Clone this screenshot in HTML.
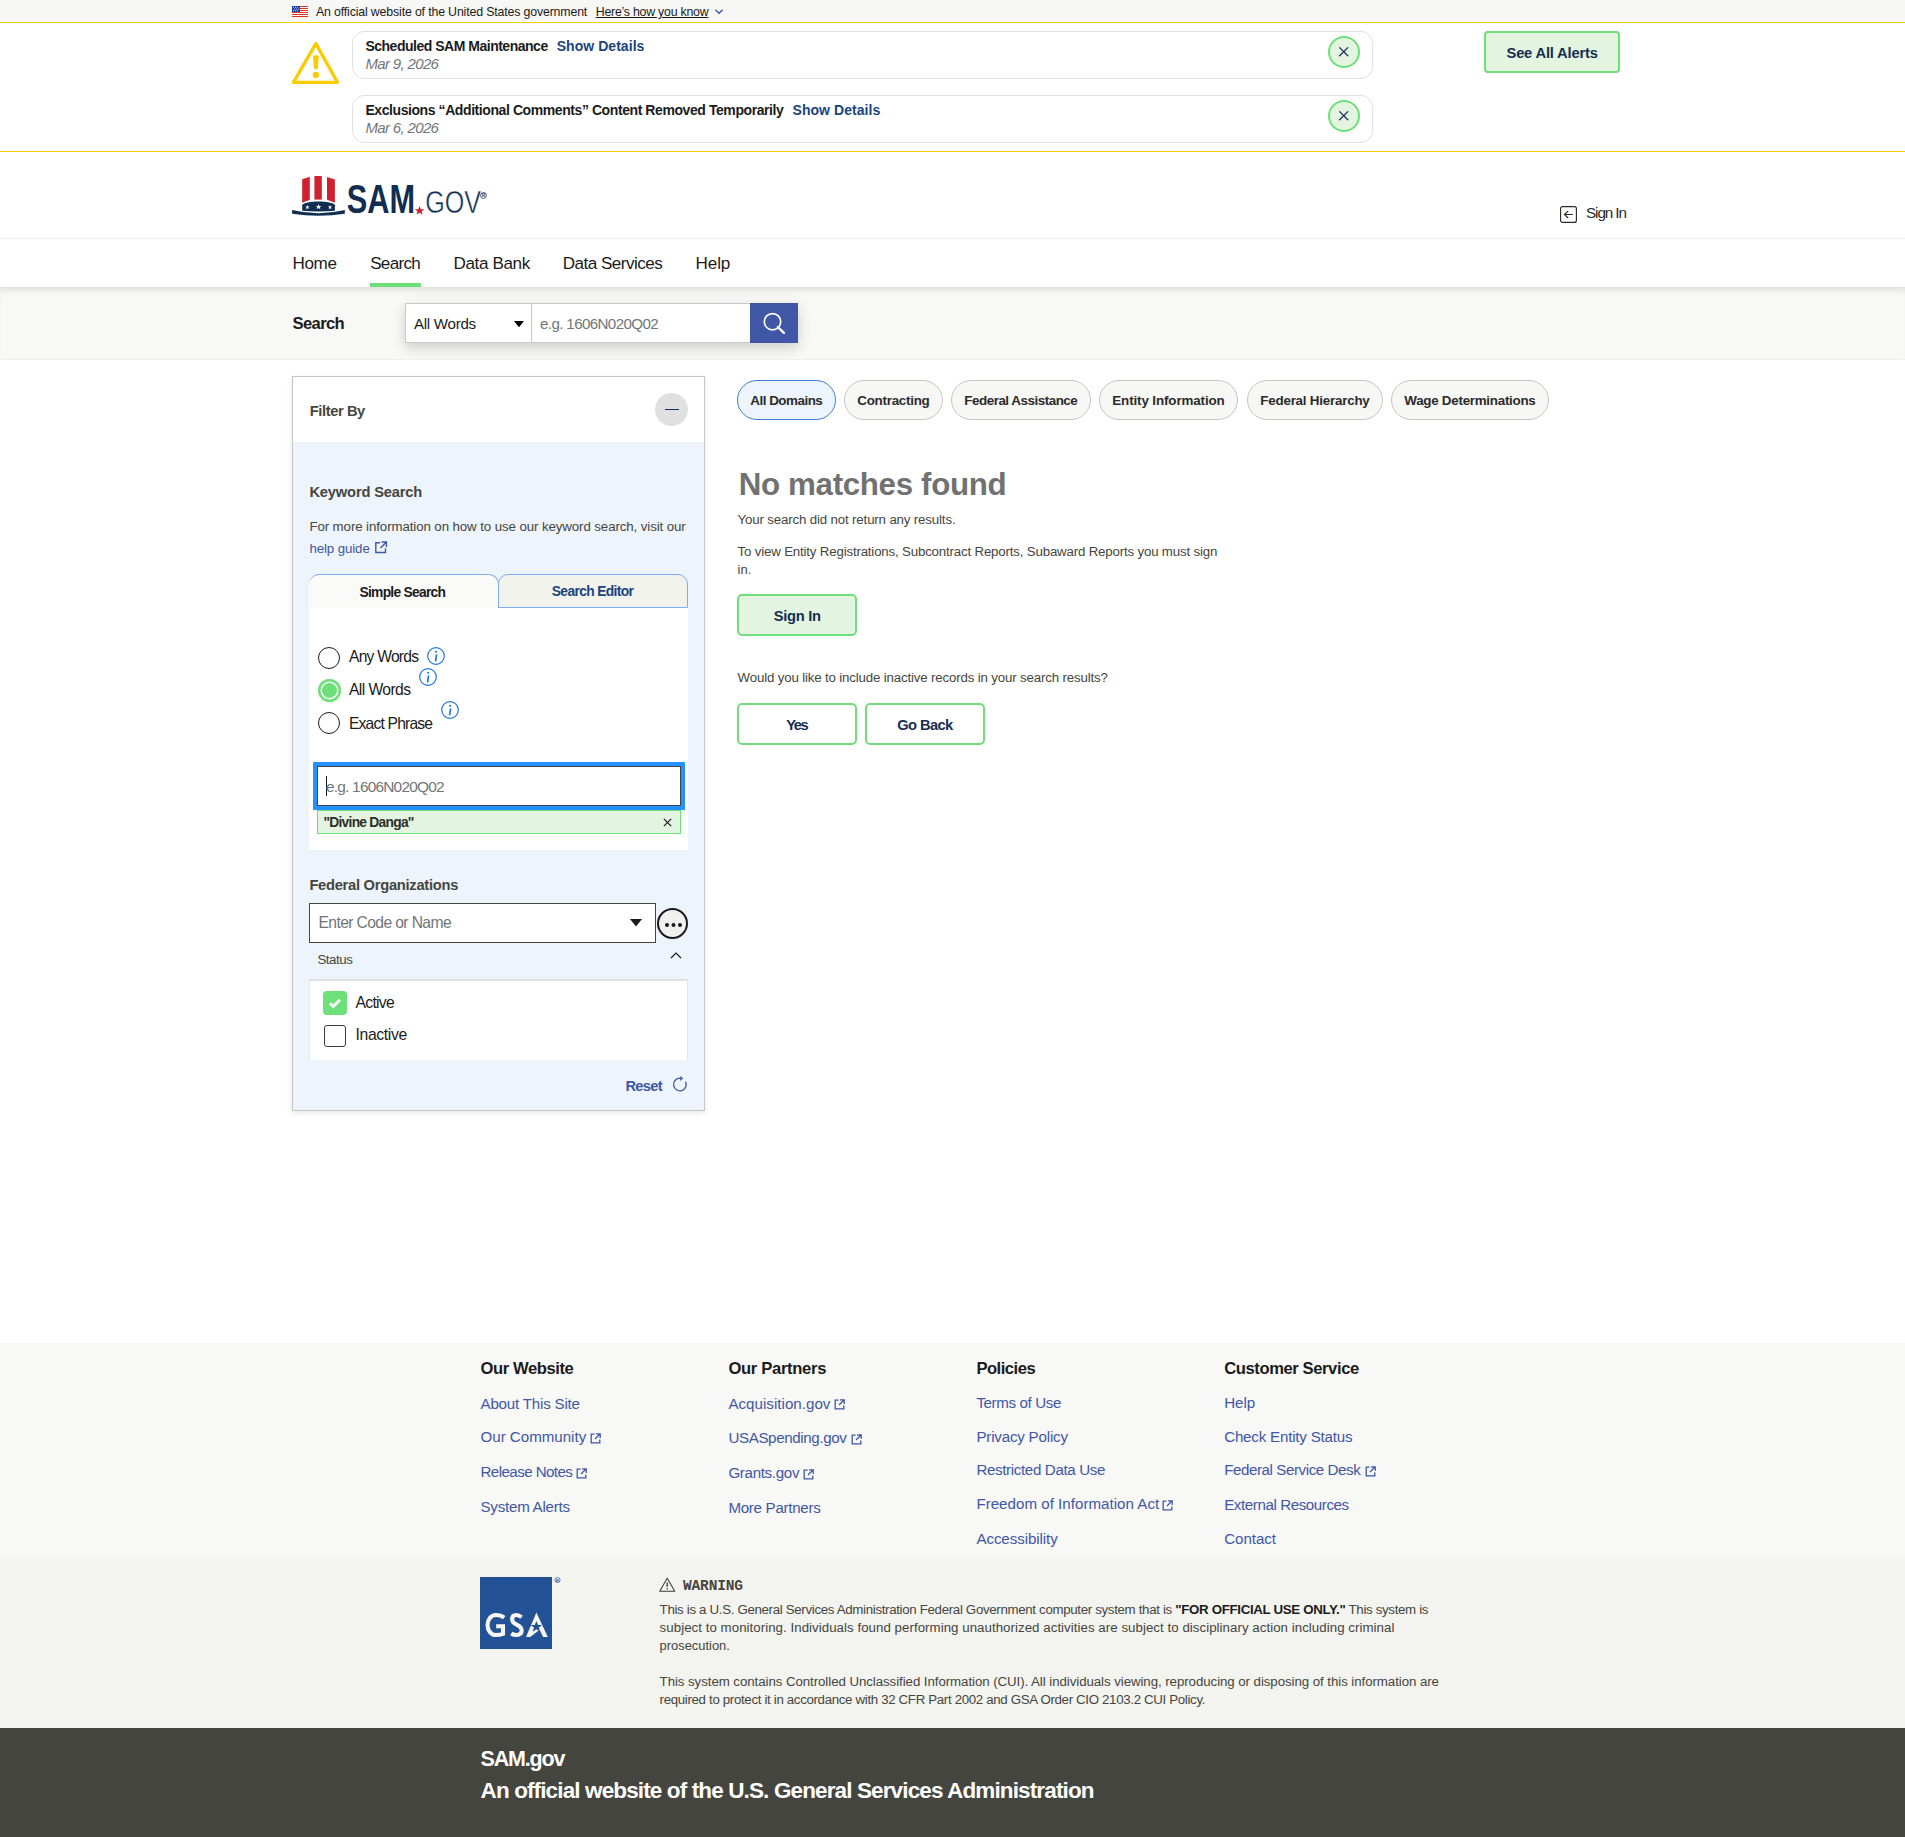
<!DOCTYPE html>
<html><head><meta charset="utf-8"><title>SAM.gov | Search</title>
<style>
html,body{margin:0;padding:0;}
body{width:1905px;height:1837px;position:relative;overflow:hidden;background:#fff;font-family:"Liberation Sans", sans-serif;}
.t{position:absolute;white-space:nowrap;}
.r{position:absolute;}
svg text{font-family:"Liberation Sans", sans-serif;}
</style></head><body>
<div class="r" style="left:0px;top:0px;width:1905px;height:21px;background:#f7f7f5;"></div>
<div class="r" style="left:0px;top:21px;width:1905px;height:1px;background:#f9fafc;"></div>
<div class="r" style="left:0px;top:22px;width:1905px;height:1px;background:#facc00;"></div>
<svg class="r" style="left:292px;top:6px" width="16" height="11" viewBox="0 0 16 11">
<rect width="16" height="11" fill="#fff"/>
<g fill="#e0301e"><rect y="0" width="16" height="1"/><rect y="2" width="16" height="1"/><rect y="4" width="16" height="1"/><rect y="6" width="16" height="1"/><rect y="8" width="16" height="1"/><rect y="10" width="16" height="1"/></g>
<rect width="8" height="6" fill="#1a3fa8"/>
<g fill="#fff"><circle cx="1.5" cy="1.2" r=".5"/><circle cx="3.5" cy="1.2" r=".5"/><circle cx="5.5" cy="1.2" r=".5"/><circle cx="2.5" cy="3" r=".5"/><circle cx="4.5" cy="3" r=".5"/><circle cx="6.5" cy="3" r=".5"/><circle cx="1.5" cy="4.8" r=".5"/><circle cx="3.5" cy="4.8" r=".5"/><circle cx="5.5" cy="4.8" r=".5"/></g></svg>
<div class="t" style="left:316px;top:5.02px;font-size:12.36px;line-height:15px;color:#1b1b1b;letter-spacing:-0.162px;">An official website of the United States government</div>
<div class="t" style="left:595.7px;top:5.02px;font-size:12.36px;line-height:15px;color:#1b1b1b;text-decoration:underline;text-underline-offset:1px;letter-spacing:-0.236px;">Here’s how you know</div>
<svg class="r" style="left:714px;top:8px" width="10" height="7" viewBox="0 0 10 7"><path d="M1.5 1.8 L5 5.3 L8.5 1.8" fill="none" stroke="#3452a4" stroke-width="1.3"/></svg>
<div class="r" style="left:0px;top:151px;width:1905px;height:1px;background:#facc00;"></div>
<svg class="r" style="left:288px;top:36px" width="56" height="54" viewBox="0 0 56 54">
<path d="M27.9 7.6 L49.4 46.3 L5.4 46.3 Z" fill="none" stroke="#facc00" stroke-width="3.3" stroke-linejoin="round"/>
<path d="M25 20.5 Q27.9 17.5 30.8 20.5 L29.8 32.5 Q27.9 34.5 26 32.5 Z" fill="#facc00"/>
<circle cx="27.9" cy="38.9" r="3.1" fill="#facc00"/></svg>
<div class="r" style="left:352px;top:31px;width:1021px;height:48px;border:1.5px solid #e0e0e0;border-radius:12px;box-sizing:border-box;background:#fff;"></div>
<div class="t" style="left:365.4px;top:37.05px;font-size:14px;line-height:18px;font-weight:700;color:#1b1b1b;letter-spacing:-0.487px;">Scheduled SAM Maintenance</div>
<div class="t" style="left:556.7px;top:37.05px;font-size:14px;line-height:18px;font-weight:700;color:#1a4480;letter-spacing:0.051px;">Show Details</div>
<div class="t" style="left:365.4px;top:54.19px;font-size:15.04px;line-height:19px;color:#71767a;font-style:italic;letter-spacing:-0.662px;">Mar 9, 2026</div>
<div class="r" style="left:1328px;top:36px;width:32px;height:32px;border:2px solid #6ee07a;border-radius:50%;box-sizing:border-box;background:#e3f5e1;"><svg width="28" height="28" viewBox="0 0 28 28" style="position:absolute;left:0;top:0"><path d="M9.6 9.6 L17.8 17.8 M17.8 9.6 L9.6 17.8" stroke="#162e51" stroke-width="1.25" stroke-linecap="round"/></svg></div>
<div class="r" style="left:352px;top:95px;width:1021px;height:48px;border:1.5px solid #e0e0e0;border-radius:12px;box-sizing:border-box;background:#fff;"></div>
<div class="t" style="left:365.4px;top:101.05px;font-size:14px;line-height:18px;font-weight:700;color:#1b1b1b;letter-spacing:-0.419px;">Exclusions “Additional Comments” Content Removed Temporarily</div>
<div class="t" style="left:792.5px;top:101.05px;font-size:14px;line-height:18px;font-weight:700;color:#1a4480;letter-spacing:0.051px;">Show Details</div>
<div class="t" style="left:365.4px;top:118.19px;font-size:15.04px;line-height:19px;color:#71767a;font-style:italic;letter-spacing:-0.662px;">Mar 6, 2026</div>
<div class="r" style="left:1328px;top:100px;width:32px;height:32px;border:2px solid #6ee07a;border-radius:50%;box-sizing:border-box;background:#e3f5e1;"><svg width="28" height="28" viewBox="0 0 28 28" style="position:absolute;left:0;top:0"><path d="M9.6 9.6 L17.8 17.8 M17.8 9.6 L9.6 17.8" stroke="#162e51" stroke-width="1.25" stroke-linecap="round"/></svg></div>
<div class="r" style="left:1484px;top:31px;width:136px;height:42px;border:2px solid #6ee07a;border-radius:4px;box-sizing:border-box;background:#e3f5e1;"></div>
<div class="t" style="left:1506.5px;top:43.81px;font-size:14.7px;line-height:18px;font-weight:700;color:#162e51;letter-spacing:-0.170px;">See All Alerts</div>
<svg class="r" style="left:291px;top:175px" width="200" height="44" viewBox="0 0 200 44">
<g fill="#d0202e"><path d="M11.2 4.3 L18.8 1.8 L18.8 24.8 L11.2 27.7 Z"/><path d="M23.4 1 L30.8 1 L30.8 24.6 L23.4 24.6 Z"/><path d="M36 2 L43.9 4.4 L43.9 27.7 L36 24.8 Z"/></g>
<path d="M11.2 30.2 C13.5 25.2 41.6 25.2 43.9 30.2 L43.9 35.8 Q27.5 37.2 11.2 35.8 Z" fill="#112e51"/>
<g fill="#fff"><path d="M16.40 30.00 L16.94 31.56 L18.59 31.59 L17.27 32.58 L17.75 34.16 L16.40 33.22 L15.05 34.16 L15.53 32.58 L14.21 31.59 L15.86 31.56Z"/><path d="M27.60 28.90 L28.31 30.93 L30.45 30.97 L28.74 32.27 L29.36 34.33 L27.60 33.10 L25.84 34.33 L26.46 32.27 L24.75 30.97 L26.89 30.93Z"/><path d="M39.00 30.00 L39.54 31.56 L41.19 31.59 L39.87 32.58 L40.35 34.16 L39.00 33.22 L37.65 34.16 L38.13 32.58 L36.81 31.59 L38.46 31.56Z"/></g>
<path d="M1.1 35 Q27.5 41.4 53.8 35 L53.8 38.8 Q27.5 42.8 1.1 38.8 Z" fill="#112e51"/>
<text x="55.7" y="38" font-family="Liberation Sans" font-weight="700" font-size="40" fill="#112e51" textLength="68.3" lengthAdjust="spacingAndGlyphs">SAM</text>
<path d="M128.6 31 l1.3 3.2 3.4 .1 -2.7 2.1 1 3.3 -3 -2 -3 2 1 -3.3 -2.7 -2.1 3.4 -.1z" fill="#d0202e"/>
<text x="134.2" y="38.3" font-family="Liberation Sans" font-weight="400" font-size="30.5" fill="#112e51" stroke="#fff" stroke-width=".45" textLength="55.8" lengthAdjust="spacingAndGlyphs">GOV</text>
<circle cx="192.5" cy="20.5" r="2.9" fill="none" stroke="#112e51" stroke-width=".8"/><text x="192.5" y="22.3" font-size="4.5" font-weight="700" text-anchor="middle" fill="#112e51" font-family="Liberation Sans">R</text></svg>
<div class="r" style="left:0px;top:238px;width:1905px;height:1px;background:#f0f0ec;"></div>
<svg class="r" style="left:1560px;top:206px" width="18" height="17" viewBox="0 0 18 17"><rect x=".6" y=".6" width="15.8" height="15.8" rx="2" fill="none" stroke="#2b2b28" stroke-width="1.15"/><path d="M12.9 8.5 L4.2 8.5 M8.2 5 L4.4 8.5 L8.2 12" fill="none" stroke="#2b2b28" stroke-width="1.1"/></svg>
<div class="t" style="left:1586px;top:203.30px;font-size:15.3px;line-height:19px;color:#2b2b28;letter-spacing:-1.104px;">Sign In</div>
<div class="t" style="left:292.5px;top:252.77px;font-size:17.1px;line-height:21px;color:#1b1b1b;letter-spacing:-0.370px;">Home</div>
<div class="t" style="left:370.2px;top:252.77px;font-size:17.1px;line-height:21px;color:#1b1b1b;letter-spacing:-0.714px;">Search</div>
<div class="t" style="left:453.5px;top:252.77px;font-size:17.1px;line-height:21px;color:#1b1b1b;letter-spacing:-0.379px;">Data Bank</div>
<div class="t" style="left:562.7px;top:252.77px;font-size:17.1px;line-height:21px;color:#1b1b1b;letter-spacing:-0.517px;">Data Services</div>
<div class="t" style="left:695.6px;top:252.77px;font-size:17.1px;line-height:21px;color:#1b1b1b;letter-spacing:-0.152px;">Help</div>
<div class="r" style="left:370px;top:283px;width:51px;height:4px;background:#6ee07a;"></div>
<div class="r" style="left:0px;top:287px;width:1905px;height:72.5px;background:#f8f8f6;box-shadow:inset 0 8px 8px -6px rgba(0,0,0,.13);border-bottom:1px solid #f0f0ea;box-sizing:border-box;"></div>
<div class="t" style="left:292.5px;top:312.95px;font-size:16.6px;line-height:21px;font-weight:700;color:#1b1b1b;letter-spacing:-0.632px;">Search</div>
<div class="r" style="left:405px;top:303px;width:393px;height:40px;box-shadow:0 5px 12px rgba(0,0,0,.17);"></div>
<div class="r" style="left:531px;top:303px;width:220px;height:40px;background:#fff;border:1px solid #c9c9c9;box-sizing:border-box;"></div>
<div class="r" style="left:405px;top:303px;width:127px;height:40px;background:#fff;border:1px solid #c9c9c9;box-sizing:border-box;"></div>
<div class="t" style="left:414px;top:314.25px;font-size:15.14px;line-height:19px;color:#1b1b1b;letter-spacing:-0.292px;">All Words</div>
<svg class="r" style="left:514px;top:321.4px" width="10" height="7" viewBox="0 0 10 7"><path d="M0 0 L10 0 L5 6.2Z" fill="#000"/></svg>
<div class="t" style="left:540px;top:314.25px;font-size:15.14px;line-height:19px;color:#71767a;letter-spacing:-0.615px;">e.g. 1606N020Q02</div>
<div class="r" style="left:750px;top:303px;width:48px;height:40px;background:#3f57a6;"><svg width="48" height="40" viewBox="0 0 48 40" style="position:absolute;left:0;top:0"><circle cx="22.5" cy="18.7" r="8.2" fill="none" stroke="#fff" stroke-width="1.75"/><path d="M27.9 24.1 L33.9 29.8" stroke="#fff" stroke-width="2.4" stroke-linecap="round"/></svg></div>
<div class="r" style="left:292px;top:376px;width:413px;height:735px;border:1px solid #c6c6c6;box-sizing:border-box;background:#edf4fb;box-shadow:0 2px 6px rgba(0,0,0,.10);"></div>
<div class="r" style="left:293px;top:377px;width:411px;height:65px;background:#fff;"></div>
<div class="t" style="left:309.7px;top:402.21px;font-size:14.7px;line-height:18px;font-weight:700;color:#454540;letter-spacing:-0.396px;">Filter By</div>
<div class="r" style="left:655px;top:393px;width:33px;height:33px;background:#e0e0e0;border-radius:50%;"><div style="position:absolute;left:10px;top:16px;width:14px;height:1.4px;background:#0b3163"></div></div>
<div class="t" style="left:309.4px;top:483.41px;font-size:14.7px;line-height:18px;font-weight:700;color:#454540;letter-spacing:-0.170px;">Keyword Search</div>
<div class="t" style="left:309.4px;top:517.50px;font-size:13.29px;line-height:17px;color:#454540;letter-spacing:-0.095px;">For more information on how to use our keyword search, visit our</div>
<div class="t" style="left:309.4px;top:539.50px;font-size:13.29px;line-height:17px;color:#3f57a6;letter-spacing:-0.100px;">help guide</div>
<svg class="r" style="left:374px;top:541px" width="14" height="13" viewBox="0 0 14 13"><path d="M6 1.8 L1.8 1.8 L1.8 11.5 L11.5 11.5 L11.5 7.3" fill="none" stroke="#3f57a6" stroke-width="1.4"/><path d="M7.5 1 L12.4 1 L12.4 5.9 M12.4 1 L6.5 6.9" fill="none" stroke="#3f57a6" stroke-width="1.4"/></svg>
<div class="r" style="left:309px;top:574px;width:190px;height:34px;background:#fafaf8;border-top:1px solid #80acf8;border-right:1px solid #80acf8;border-radius:10px 10px 0 0;box-sizing:border-box;"></div>
<div class="r" style="left:498px;top:574px;width:190px;height:34px;background:#f3f3ee;border:1px solid #80acf8;border-radius:10px 10px 0 0;box-sizing:border-box;"></div>
<div class="t" style="left:359.5px;top:583.72px;font-size:13.8px;line-height:17px;font-weight:700;color:#1b1b1b;letter-spacing:-0.724px;">Simple Search</div>
<div class="t" style="left:551.8px;top:582.72px;font-size:13.8px;line-height:17px;font-weight:700;color:#1a4480;letter-spacing:-0.643px;">Search Editor</div>
<div class="r" style="left:309px;top:608px;width:379px;height:242px;background:#fff;"></div>
<div class="r" style="left:318px;top:646.8px;width:22px;height:22px;border:1.5px solid #1b1b1b;border-radius:50%;box-sizing:border-box;background:#fff;"></div>
<div class="t" style="left:349px;top:647.47px;font-size:15.66px;line-height:20px;color:#1b1b1b;letter-spacing:-0.785px;">Any Words</div>
<svg class="r" style="left:427px;top:647.2px" width="18" height="18" viewBox="0 0 18 18"><circle cx="9" cy="9" r="8.3" fill="none" stroke="#2172e0" stroke-width="1.2"/><circle cx="9.1" cy="4.8" r="1.05" fill="#2172e0"/><path d="M9.5 8 L8.7 13.6" stroke="#2172e0" stroke-width="1.7" stroke-linecap="round"/></svg>
<div class="r" style="left:317.5px;top:679.4px;width:23px;height:23px;border-radius:50%;background:#6ee07a;box-shadow:inset 0 0 0 2.5px #6ee07a, inset 0 0 0 4px #fff;"></div>
<div class="t" style="left:349px;top:680.37px;font-size:15.66px;line-height:20px;color:#1b1b1b;letter-spacing:-0.588px;">All Words</div>
<svg class="r" style="left:419px;top:668.2px" width="18" height="18" viewBox="0 0 18 18"><circle cx="9" cy="9" r="8.3" fill="none" stroke="#2172e0" stroke-width="1.2"/><circle cx="9.1" cy="4.8" r="1.05" fill="#2172e0"/><path d="M9.5 8 L8.7 13.6" stroke="#2172e0" stroke-width="1.7" stroke-linecap="round"/></svg>
<div class="r" style="left:318px;top:711.9px;width:22px;height:22px;border:1.5px solid #1b1b1b;border-radius:50%;box-sizing:border-box;background:#fff;"></div>
<div class="t" style="left:349px;top:713.57px;font-size:15.66px;line-height:20px;color:#1b1b1b;letter-spacing:-0.830px;">Exact Phrase</div>
<svg class="r" style="left:441px;top:701px" width="18" height="18" viewBox="0 0 18 18"><circle cx="9" cy="9" r="8.3" fill="none" stroke="#2172e0" stroke-width="1.2"/><circle cx="9.1" cy="4.8" r="1.05" fill="#2172e0"/><path d="M9.5 8 L8.7 13.6" stroke="#2172e0" stroke-width="1.7" stroke-linecap="round"/></svg>
<div class="r" style="left:313px;top:762px;width:372px;height:48px;border:4px solid #2491ff;box-sizing:border-box;"></div>
<div class="r" style="left:317px;top:766px;width:364px;height:40px;border:1.6px solid #3d4551;box-sizing:border-box;background:#fff;"></div>
<div class="r" style="left:326px;top:776px;width:1.3px;height:20px;background:#1b1b1b;"></div>
<div class="t" style="left:326px;top:776.55px;font-size:15.45px;line-height:19px;color:#71767a;letter-spacing:-0.791px;">e.g. 1606N020Q02</div>
<div class="r" style="left:317px;top:810px;width:364px;height:24px;background:#e3f5e1;border:1px solid #6ee07a;box-sizing:border-box;"></div>
<div class="t" style="left:323.5px;top:814.12px;font-size:13.8px;line-height:17px;font-weight:700;color:#2e2e2a;letter-spacing:-0.738px;">"Divine Danga"</div>
<svg class="r" style="left:663px;top:818px" width="9" height="9" viewBox="0 0 9 9"><path d="M.8 .8 L8.2 8.2 M8.2 .8 L.8 8.2" stroke="#1b1b1b" stroke-width="1.2"/></svg>
<div class="t" style="left:309.4px;top:876.31px;font-size:14.7px;line-height:18px;font-weight:700;color:#454540;letter-spacing:-0.263px;">Federal Organizations</div>
<div class="r" style="left:309px;top:903px;width:347px;height:40px;border:1.5px solid #46463f;box-sizing:border-box;background:#fff;"></div>
<div class="t" style="left:318.5px;top:912.87px;font-size:15.66px;line-height:20px;color:#71767a;letter-spacing:-0.617px;">Enter Code or Name</div>
<svg class="r" style="left:630px;top:919px" width="12" height="8" viewBox="0 0 12 8"><path d="M0 0 L12 0 L6 7.4Z" fill="#1b1b1b"/></svg>
<div class="r" style="left:657px;top:908px;width:31px;height:31px;border:2px solid #1b1b1b;border-radius:50%;box-sizing:border-box;background:#f0f0f0;"><div style="position:absolute;left:6px;top:13px;width:4px;height:4px;border-radius:50%;background:#1b1b1b;box-shadow:6.5px 0 0 #1b1b1b,13px 0 0 #1b1b1b"></div></div>
<div class="t" style="left:317.4px;top:951.30px;font-size:13.29px;line-height:17px;color:#454540;letter-spacing:-0.431px;">Status</div>
<svg class="r" style="left:670px;top:951px" width="12" height="8" viewBox="0 0 12 8"><path d="M1 7 L6 2 L11 7" fill="none" stroke="#1b1b1b" stroke-width="1.2"/></svg>
<div class="r" style="left:309px;top:979px;width:379px;height:81px;background:#fff;border-top:2px solid #dfe1e2;border-left:1px solid #e6e6e2;border-right:1px solid #e6e6e2;box-sizing:border-box;"></div>
<div class="r" style="left:323px;top:991px;width:24px;height:24px;background:#6ee07a;border-radius:4px;"><svg width="24" height="24" viewBox="0 0 24 24" style="position:absolute;left:0;top:0"><path d="M7 12.3 L10.3 15.5 L17 8.8" fill="none" stroke="#fff" stroke-width="2.8"/></svg></div>
<div class="t" style="left:355.5px;top:992.94px;font-size:15.76px;line-height:20px;color:#1b1b1b;letter-spacing:-0.738px;">Active</div>
<div class="r" style="left:324px;top:1025px;width:22px;height:22px;border:1.5px solid #3a3a36;border-radius:3px;box-sizing:border-box;background:#fff;"></div>
<div class="t" style="left:355.5px;top:1024.94px;font-size:15.76px;line-height:20px;color:#1b1b1b;letter-spacing:-0.369px;">Inactive</div>
<div class="t" style="left:625.4px;top:1077.31px;font-size:14.7px;line-height:18px;font-weight:700;color:#3f57a6;letter-spacing:-0.704px;">Reset</div>
<svg class="r" style="left:672px;top:1075px" width="16" height="18" viewBox="0 0 16 18"><path d="M13.5 6.6 A6.3 6.3 0 1 1 8.2 3.2" fill="none" stroke="#3f57a6" stroke-width="1.3"/><path d="M8.2 0.9 L11.2 3.3 L8.2 5.9 Z" fill="#3f57a6"/></svg>
<div class="r" style="left:737px;top:380px;width:99px;height:40px;background:#edf4fb;border:1.5px solid #3d7fd8;border-radius:20px;box-sizing:border-box;"></div>
<div class="t" style="left:750.3px;top:391.66px;font-size:13.4px;line-height:17px;font-weight:700;color:#2b2b2b;letter-spacing:-0.489px;">All Domains</div>
<div class="r" style="left:844px;top:380px;width:99px;height:40px;background:#f7f7f5;border:1px solid #c6c6c6;border-radius:20px;box-sizing:border-box;"></div>
<div class="t" style="left:857.3px;top:391.66px;font-size:13.4px;line-height:17px;font-weight:700;color:#2b2b2b;letter-spacing:-0.264px;">Contracting</div>
<div class="r" style="left:951px;top:380px;width:140px;height:40px;background:#f7f7f5;border:1px solid #c6c6c6;border-radius:20px;box-sizing:border-box;"></div>
<div class="t" style="left:964.3px;top:391.66px;font-size:13.4px;line-height:17px;font-weight:700;color:#2b2b2b;letter-spacing:-0.475px;">Federal Assistance</div>
<div class="r" style="left:1099px;top:380px;width:139px;height:40px;background:#f7f7f5;border:1px solid #c6c6c6;border-radius:20px;box-sizing:border-box;"></div>
<div class="t" style="left:1112.3px;top:391.66px;font-size:13.4px;line-height:17px;font-weight:700;color:#2b2b2b;letter-spacing:-0.121px;">Entity Information</div>
<div class="r" style="left:1247px;top:380px;width:136px;height:40px;background:#f7f7f5;border:1px solid #c6c6c6;border-radius:20px;box-sizing:border-box;"></div>
<div class="t" style="left:1260.3px;top:391.66px;font-size:13.4px;line-height:17px;font-weight:700;color:#2b2b2b;letter-spacing:-0.228px;">Federal Hierarchy</div>
<div class="r" style="left:1391px;top:380px;width:158px;height:40px;background:#f7f7f5;border:1px solid #c6c6c6;border-radius:20px;box-sizing:border-box;"></div>
<div class="t" style="left:1404.3px;top:391.66px;font-size:13.4px;line-height:17px;font-weight:700;color:#2b2b2b;letter-spacing:-0.273px;">Wage Determinations</div>
<div class="t" style="left:738.7px;top:465.05px;font-size:31.3px;line-height:39px;font-weight:700;color:#717171;letter-spacing:-0.333px;">No matches found</div>
<div class="t" style="left:737.6px;top:511.10px;font-size:13.29px;line-height:17px;color:#454540;letter-spacing:-0.157px;">Your search did not return any results.</div>
<div class="t" style="left:737.6px;top:543.00px;font-size:13.29px;line-height:17px;color:#454540;letter-spacing:-0.177px;">To view Entity Registrations, Subcontract Reports, Subaward Reports you must sign</div>
<div class="t" style="left:737.6px;top:562.23px;font-size:12.9px;line-height:16px;color:#454540;">in.</div>
<div class="r" style="left:737px;top:594px;width:120px;height:42px;border:2.2px solid #6ee07a;border-radius:5px;box-sizing:border-box;background:#e3f5e1;"></div>
<div class="t" style="left:773.8px;top:607.21px;font-size:14.7px;line-height:18px;font-weight:700;color:#162e51;letter-spacing:-0.295px;">Sign In</div>
<div class="t" style="left:737.6px;top:668.80px;font-size:13.29px;line-height:17px;color:#454540;letter-spacing:-0.160px;">Would you like to include inactive records in your search results?</div>
<div class="r" style="left:737px;top:703px;width:120px;height:42px;border:2.2px solid #6ee07a;border-radius:5px;box-sizing:border-box;background:#fff;"></div>
<div class="t" style="left:786.3px;top:716.31px;font-size:14.7px;line-height:18px;font-weight:700;color:#162e51;letter-spacing:-1.464px;">Yes</div>
<div class="r" style="left:865px;top:703px;width:120px;height:42px;border:2.2px solid #6ee07a;border-radius:5px;box-sizing:border-box;background:#fff;"></div>
<div class="t" style="left:897.3px;top:716.31px;font-size:14.7px;line-height:18px;font-weight:700;color:#162e51;letter-spacing:-0.599px;">Go Back</div>
<div class="r" style="left:0px;top:1343px;width:1905px;height:214px;background:#f8f8f6;"></div>
<div class="r" style="left:0px;top:1557px;width:1905px;height:171px;background:#f3f3ef;"></div>
<div class="r" style="left:0px;top:1728px;width:1905px;height:109px;background:#454540;"></div>
<div class="t" style="left:480.5px;top:1358.45px;font-size:16.6px;line-height:21px;font-weight:700;color:#1b1b1b;letter-spacing:-0.414px;">Our Website</div>
<div class="t" style="left:480.5px;top:1393.55px;font-size:15.14px;line-height:19px;color:#3f57a6;letter-spacing:-0.200px;">About This Site</div>
<div class="t" style="left:480.5px;top:1427.35px;font-size:15.14px;line-height:19px;color:#3f57a6;letter-spacing:-0.017px;">Our Community</div>
<div class="r" style="left:590.4px;top:1430.2px;width:11px;height:11px"><svg width="11" height="11" viewBox="0 0 11 11"><path d="M4.6 1.2 L1.2 1.2 L1.2 9.8 L9.8 9.8 L9.8 6.4" fill="none" stroke="#3f57a6" stroke-width="1.3"/><path d="M6 .8 L10.2 .8 L10.2 5 M10.2 .8 L5 6" fill="none" stroke="#3f57a6" stroke-width="1.3"/></svg></div>
<div class="t" style="left:480.5px;top:1462.45px;font-size:15.14px;line-height:19px;color:#3f57a6;letter-spacing:-0.568px;">Release Notes</div>
<div class="r" style="left:576.2px;top:1465.3000000000002px;width:11px;height:11px"><svg width="11" height="11" viewBox="0 0 11 11"><path d="M4.6 1.2 L1.2 1.2 L1.2 9.8 L9.8 9.8 L9.8 6.4" fill="none" stroke="#3f57a6" stroke-width="1.3"/><path d="M6 .8 L10.2 .8 L10.2 5 M10.2 .8 L5 6" fill="none" stroke="#3f57a6" stroke-width="1.3"/></svg></div>
<div class="t" style="left:480.5px;top:1497.05px;font-size:15.14px;line-height:19px;color:#3f57a6;letter-spacing:-0.239px;">System Alerts</div>
<div class="t" style="left:728.4px;top:1358.45px;font-size:16.6px;line-height:21px;font-weight:700;color:#1b1b1b;letter-spacing:-0.314px;">Our Partners</div>
<div class="t" style="left:728.4px;top:1393.55px;font-size:15.14px;line-height:19px;color:#3f57a6;letter-spacing:0.019px;">Acquisition.gov</div>
<div class="r" style="left:834px;top:1396.4px;width:11px;height:11px"><svg width="11" height="11" viewBox="0 0 11 11"><path d="M4.6 1.2 L1.2 1.2 L1.2 9.8 L9.8 9.8 L9.8 6.4" fill="none" stroke="#3f57a6" stroke-width="1.3"/><path d="M6 .8 L10.2 .8 L10.2 5 M10.2 .8 L5 6" fill="none" stroke="#3f57a6" stroke-width="1.3"/></svg></div>
<div class="t" style="left:728.4px;top:1428.35px;font-size:15.14px;line-height:19px;color:#3f57a6;letter-spacing:-0.365px;">USASpending.gov</div>
<div class="r" style="left:850.6px;top:1431.2px;width:11px;height:11px"><svg width="11" height="11" viewBox="0 0 11 11"><path d="M4.6 1.2 L1.2 1.2 L1.2 9.8 L9.8 9.8 L9.8 6.4" fill="none" stroke="#3f57a6" stroke-width="1.3"/><path d="M6 .8 L10.2 .8 L10.2 5 M10.2 .8 L5 6" fill="none" stroke="#3f57a6" stroke-width="1.3"/></svg></div>
<div class="t" style="left:728.4px;top:1463.15px;font-size:15.14px;line-height:19px;color:#3f57a6;letter-spacing:-0.320px;">Grants.gov</div>
<div class="r" style="left:803px;top:1466.0px;width:11px;height:11px"><svg width="11" height="11" viewBox="0 0 11 11"><path d="M4.6 1.2 L1.2 1.2 L1.2 9.8 L9.8 9.8 L9.8 6.4" fill="none" stroke="#3f57a6" stroke-width="1.3"/><path d="M6 .8 L10.2 .8 L10.2 5 M10.2 .8 L5 6" fill="none" stroke="#3f57a6" stroke-width="1.3"/></svg></div>
<div class="t" style="left:728.4px;top:1498.35px;font-size:15.14px;line-height:19px;color:#3f57a6;letter-spacing:-0.286px;">More Partners</div>
<div class="t" style="left:976.4px;top:1358.45px;font-size:16.6px;line-height:21px;font-weight:700;color:#1b1b1b;letter-spacing:-0.491px;">Policies</div>
<div class="t" style="left:976.4px;top:1393.45px;font-size:15.14px;line-height:19px;color:#3f57a6;letter-spacing:-0.372px;">Terms of Use</div>
<div class="t" style="left:976.4px;top:1427.15px;font-size:15.14px;line-height:19px;color:#3f57a6;letter-spacing:-0.195px;">Privacy Policy</div>
<div class="t" style="left:976.4px;top:1460.35px;font-size:15.14px;line-height:19px;color:#3f57a6;letter-spacing:-0.352px;">Restricted Data Use</div>
<div class="t" style="left:976.4px;top:1494.05px;font-size:15.14px;line-height:19px;color:#3f57a6;letter-spacing:0.015px;">Freedom of Information Act</div>
<div class="r" style="left:1162px;top:1496.9px;width:11px;height:11px"><svg width="11" height="11" viewBox="0 0 11 11"><path d="M4.6 1.2 L1.2 1.2 L1.2 9.8 L9.8 9.8 L9.8 6.4" fill="none" stroke="#3f57a6" stroke-width="1.3"/><path d="M6 .8 L10.2 .8 L10.2 5 M10.2 .8 L5 6" fill="none" stroke="#3f57a6" stroke-width="1.3"/></svg></div>
<div class="t" style="left:976.4px;top:1529.05px;font-size:15.14px;line-height:19px;color:#3f57a6;letter-spacing:-0.081px;">Accessibility</div>
<div class="t" style="left:1224.2px;top:1358.45px;font-size:16.6px;line-height:21px;font-weight:700;color:#1b1b1b;letter-spacing:-0.408px;">Customer Service</div>
<div class="t" style="left:1224.2px;top:1393.45px;font-size:15.14px;line-height:19px;color:#3f57a6;letter-spacing:-0.070px;">Help</div>
<div class="t" style="left:1224.2px;top:1427.15px;font-size:15.14px;line-height:19px;color:#3f57a6;letter-spacing:-0.199px;">Check Entity Status</div>
<div class="t" style="left:1224.2px;top:1460.35px;font-size:15.14px;line-height:19px;color:#3f57a6;letter-spacing:-0.421px;">Federal Service Desk</div>
<div class="r" style="left:1364.5px;top:1463.2px;width:11px;height:11px"><svg width="11" height="11" viewBox="0 0 11 11"><path d="M4.6 1.2 L1.2 1.2 L1.2 9.8 L9.8 9.8 L9.8 6.4" fill="none" stroke="#3f57a6" stroke-width="1.3"/><path d="M6 .8 L10.2 .8 L10.2 5 M10.2 .8 L5 6" fill="none" stroke="#3f57a6" stroke-width="1.3"/></svg></div>
<div class="t" style="left:1224.2px;top:1494.85px;font-size:15.14px;line-height:19px;color:#3f57a6;letter-spacing:-0.411px;">External Resources</div>
<div class="t" style="left:1224.2px;top:1529.05px;font-size:15.14px;line-height:19px;color:#3f57a6;letter-spacing:-0.040px;">Contact</div>
<svg class="r" style="left:480px;top:1577px" width="82" height="73" viewBox="0 0 82 73">
<rect x="0" y="0" width="72" height="72" fill="#235196"/>
<g fill="none" stroke="#f6f6f2" stroke-width="4.1"><path d="M24.2 40.6 Q21 38 15.8 38 A8.3 10 0 0 0 15.8 58 Q20 58 23 56.8 L23 49.3 L16.2 49.3"/><path d="M41.6 40.2 Q39 38 36.3 38 Q32.1 38 32.1 42.3 Q32.1 45.7 36.6 47.7 Q41.7 50 41.7 53.6 Q41.7 58 36.5 58 Q33.4 58 31.2 56.5"/></g>
<path d="M56.4 35.5 L67.8 60 L46 60 Z" fill="#f6f6f2"/>
<path d="M56.4 43.9 L58 48 L62.2 48 L58.8 50.6 L60.2 54.8 L56.4 52.2 L52.6 54.8 L54 50.6 L50.6 48 L54.8 48 Z" fill="#235196"/>
<path d="M49.6 60.5 L58.6 53.6 L60.2 53.9 L63.3 60.5 Z" fill="#235196"/>
<circle cx="77.5" cy="3" r="2.6" fill="none" stroke="#235196" stroke-width=".7"/><text x="77.5" y="4.6" font-size="4" font-weight="700" text-anchor="middle" fill="#235196" font-family="Liberation Sans">R</text></svg>
<svg class="r" style="left:659px;top:1577px" width="17" height="15" viewBox="0 0 17 15"><path d="M8.2 1.2 L15.8 14.3 L0.7 14.3 Z" fill="none" stroke="#3d3d3a" stroke-width="1.05" stroke-linejoin="round"/><path d="M8.2 5.6 L8.2 9.8" stroke="#3d3d3a" stroke-width="1.4"/><circle cx="8.2" cy="11.8" r=".8" fill="#3d3d3a"/></svg>
<div class="t" style="left:683px;top:1577.38px;font-size:14.5px;line-height:18px;font-weight:700;color:#454540;font-family:'Liberation Mono',monospace;letter-spacing:-0.154px;">WARNING</div>
<div class="t" style="left:659.6px;top:1601.30px;font-size:13.29px;line-height:17px;color:#454540;letter-spacing:-0.323px;">This is a U.S. General Services Administration Federal Government computer system that is <b style="color:#1b1b1b">"FOR OFFICIAL USE ONLY."</b> This system is</div>
<div class="t" style="left:659.6px;top:1619.10px;font-size:13.29px;line-height:17px;color:#454540;letter-spacing:0.042px;">subject to monitoring. Individuals found performing unauthorized activities are subject to disciplinary action including criminal</div>
<div class="t" style="left:659.6px;top:1637.53px;font-size:12.9px;line-height:16px;color:#454540;">prosecution.</div>
<div class="t" style="left:659.6px;top:1672.80px;font-size:13.29px;line-height:17px;color:#454540;letter-spacing:-0.066px;">This system contains Controlled Unclassified Information (CUI). All individuals viewing, reproducing or disposing of this information are</div>
<div class="t" style="left:659.6px;top:1690.70px;font-size:13.29px;line-height:17px;color:#454540;letter-spacing:-0.332px;">required to protect it in accordance with 32 CFR Part 2002 and GSA Order CIO 2103.2 CUI Policy.</div>
<div class="t" style="left:480.5px;top:1746.05px;font-size:21.5px;line-height:27px;font-weight:700;color:#fff;letter-spacing:-1.164px;">SAM.gov</div>
<div class="t" style="left:480.5px;top:1777.10px;font-size:22.5px;line-height:28px;font-weight:700;color:#fff;letter-spacing:-0.872px;">An official website of the U.S. General Services Administration</div>
</body></html>
